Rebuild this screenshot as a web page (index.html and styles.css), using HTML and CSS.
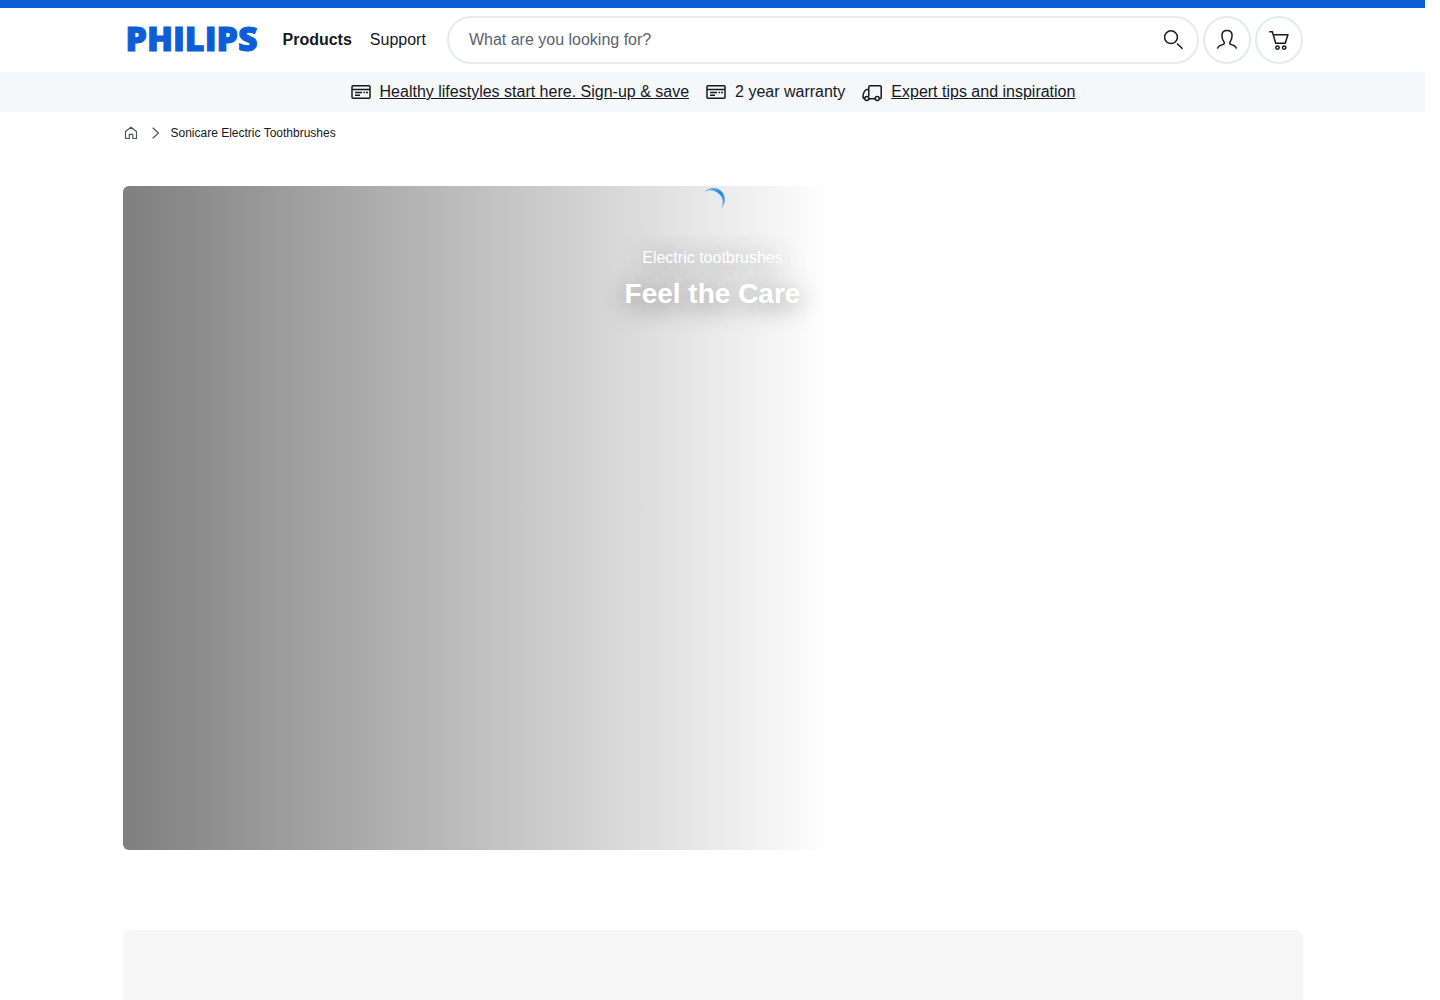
FILE: index.html
```html
<!DOCTYPE html>
<html lang="en">
<head>
<meta charset="utf-8">
<meta name="viewport" content="width=device-width, initial-scale=1">
<title>Sonicare Electric Toothbrushes | Philips</title>
<link rel="stylesheet" href="styles.css">
</head>
<body>
<header class="site-header">
  <div class="container header-row">
    <a class="logo" href="#">PHILIPS</a>
    <nav class="main-nav" aria-label="Main">
      <a class="nav-link nav-link-active" href="#">Products</a>
      <a class="nav-link" href="#">Support</a>
    </nav>
    <form class="search" role="search">
      <input class="search-input" type="text" aria-label="Search" placeholder="What are you looking for?">
      <button class="search-button" type="submit" aria-label="Search">
        <svg class="icon" width="24" height="24" viewBox="0 0 24 24"><circle cx="10" cy="9.200" r="6.400"/><path d="M16 15.500l5.500 5.300"/></svg>
      </button>
    </form>
    <button class="round-button" type="button" aria-label="Account">
      <svg class="icon" width="24" height="24" viewBox="0 0 24 24"><path d="M2.500 20.600c.4-2.500 2.300-3.200 5.200-4 1.700-.5 2-1.500 1.200-2.800C7.600 12 6.900 10.600 6.900 7.500c0-3.200 2-5 5.100-5s5.100 1.800 5.100 5c0 3.100-.7 4.500-2 6.300-.8 1.300-.5 2.300 1.200 2.800 2.900.8 4.800 1.500 5.200 4"/></svg>
    </button>
    <button class="round-button" type="button" aria-label="Cart">
      <svg class="icon" width="24" height="24" viewBox="0 0 24 24"><path d="M2.200 3.800h3.200l3.300 11.500h9.500l2.700-8.500H6.300"/><circle cx="10.500" cy="19.600" r="1.700"/><circle cx="17.200" cy="19.600" r="1.700"/></svg>
    </button>
  </div>
</header>
<div class="promo-bar">
  <div class="promo">
    <svg class="icon" width="22" height="22" viewBox="0 0 22 22"><rect x="2" y="4.800" width="18" height="12.400" rx="1"/><path d="M2 8.500h18M5 11.500h7M13.500 11.500h1.500M16 11.500h2M5 14.300h5"/></svg>
    <a class="promo-link" href="#">Healthy lifestyles start here. Sign-up &amp; save</a>
  </div>
  <div class="promo">
    <svg class="icon" width="22" height="22" viewBox="0 0 22 22"><rect x="2" y="4.800" width="18" height="12.400" rx="1"/><path d="M2 8.500h18M5 11.500h7M13.500 11.500h1.500M16 11.500h2M5 14.300h5"/></svg>
    <span>2 year warranty</span>
  </div>
  <div class="promo">
    <svg class="icon" width="22" height="22" viewBox="0 0 22 22"><path d="M7.800 15.500V6c0-.8.500-1.200 1.200-1.200h10c.7 0 1.200.4 1.200 1.200v10.500c0 .7-.4 1.200-1.200 1.200h-.5M7.800 8.500H6c-1.200 0-2.200 1-3 2.700-.7 1.500-1 2.700-1 4 0 1.500.5 2.500 1.700 2.500M8 17.700h6"/><circle cx="5.800" cy="17.400" r="2"/><circle cx="16.200" cy="17.400" r="2"/></svg>
    <a class="promo-link" href="#">Expert tips and inspiration</a>
  </div>
</div>
<main class="container">
  <nav class="breadcrumb" aria-label="Breadcrumb">
    <a class="crumb-home" href="#" aria-label="Home">
      <svg class="icon icon-thin" width="16" height="16" viewBox="0 0 16 16"><path d="M2.500 13.500v-7L8 2.200l5.500 4.300v7h-3.700V9.300H6.300v4.200z"/></svg>
    </a>
    <svg class="icon icon-thin" width="16" height="16" viewBox="0 0 16 16"><path d="M5.700 2.800l5.800 5.200-5.800 5.200"/></svg>
    <span>Sonicare Electric Toothbrushes</span>
  </nav>
  <section class="hero">
    <svg class="spinner" width="28" height="28" viewBox="0 0 28 28" aria-hidden="true">
      <defs><linearGradient id="arc" x1="0" y1="0" x2="1" y2="1"><stop offset="0" stop-color="#1e87e5" stop-opacity=".4"/><stop offset=".5" stop-color="#1e87e5"/><stop offset="1" stop-color="#1e87e5" stop-opacity=".5"/></linearGradient></defs>
      <path fill="url(#arc)" d="M5 6C9 1.500 15.500.9 20 3.500c6.800 4 8.100 12.500 2.300 18.700 2.500-5.700 1.800-11.700-3.500-15.500C14.500 3.800 10 3.200 5 6z"/>
    </svg>
    <p class="hero-eyebrow">Electric tootbrushes</p>
    <h1 class="hero-title">Feel the Care</h1>
  </section>
  <section class="panel" aria-label="Products"></section>
</main>
</body>
</html>
```
FILE: styles.css
```css
* {
  box-sizing: border-box;
}

html {
  background: #fff;
}

body {
  margin: 0 15px 0 0;
  font-family: "Liberation Sans", Arial, sans-serif;
  font-size: 16px;
  line-height: 24px;
  color: #17191c;
}

a {
  color: inherit;
  text-decoration: none;
}

.container {
  max-width: 1180px;
  margin: 0 auto;
}

.icon {
  display: block;
  flex: none;
  fill: none;
  stroke: #17191c;
  stroke-width: 1.5;
  stroke-linejoin: round;
}

.icon-thin {
  stroke: #50555c;
  stroke-width: 1.2;
}

.site-header {
  border-top: 8px solid #0b5ed7;
}

.header-row {
  display: flex;
  align-items: center;
  gap: 4px;
  height: 64px;
}

.logo {
  width: 136px;
  padding: 0 0 4px 3px;
  font-family: "Open Sans", "Noto Sans", sans-serif;
  font-size: 34px;
  font-weight: 800;
  line-height: 44px;
  color: #0b5ed7;
  -webkit-text-stroke: 1px #0b5ed7;
}

.main-nav {
  display: flex;
  gap: 18px;
  padding: 0 17px 0 20px;
}

.nav-link-active {
  font-weight: 700;
}

.search {
  display: flex;
  flex: 1;
  align-items: center;
  height: 48px;
  padding: 0 12px 0 20px;
  border: 2px solid #e6eaed;
  border-radius: 24px;
}

.search-input {
  flex: 1;
  min-width: 0;
  padding: 0;
  border: 0;
  outline: 0;
  background: none;
  font: inherit;
}

.search-input::placeholder {
  color: #5b6470;
  opacity: 1;
}

.search-button {
  padding: 0;
  border: 0;
  background: none;
}

.round-button {
  display: flex;
  align-items: center;
  justify-content: center;
  width: 48px;
  height: 48px;
  padding: 0;
  border: 2px solid #e6eaed;
  border-radius: 50%;
  background: #fff;
}

.promo-bar {
  display: flex;
  justify-content: center;
  gap: 16px;
  padding: 8px 0;
  background: #f5f7f9;
}

.promo {
  display: flex;
  align-items: center;
  gap: 8px;
}

.promo-link {
  text-decoration: underline;
}

.breadcrumb {
  display: flex;
  align-items: center;
  gap: 8px;
  padding-top: 13px;
  font-size: 12px;
  line-height: 16px;
}

.hero {
  display: flex;
  flex-direction: column;
  align-items: center;
  min-height: 664px;
  margin-top: 45px;
  border-radius: 6px;
  background: linear-gradient(90deg, rgba(0, 0, 0, 0.5), rgba(0, 0, 0, 0) 60%);
  color: #fff;
  text-shadow: 0 4px 24px rgba(0, 0, 0, 0.5);
}

.spinner {
  display: block;
}

.hero-eyebrow {
  margin: 32px 0 0;
}

.hero-title {
  margin: 6px 0 0;
  font-size: 28px;
  line-height: 36px;
}

.panel {
  min-height: 70px;
  margin-top: 80px;
  border-radius: 8px 8px 0 0;
  background: #f6f6f6;
}
```
